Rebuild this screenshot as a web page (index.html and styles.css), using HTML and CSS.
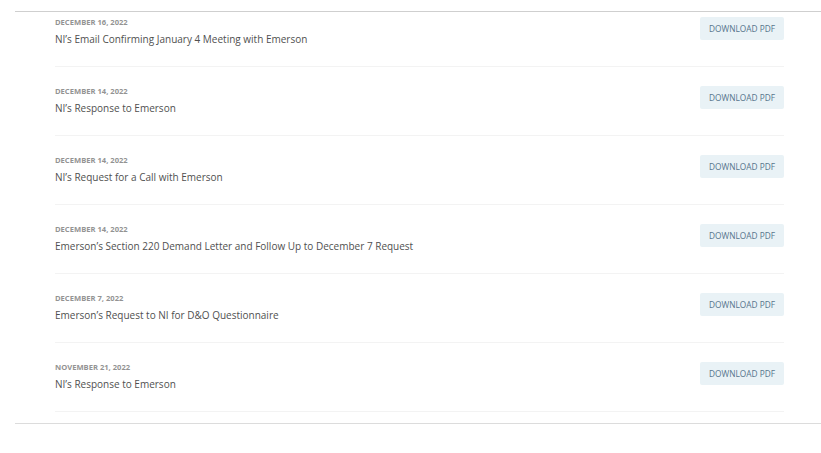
FILE: index.html
```html
<!DOCTYPE html>
<html lang="en">
<head>
  <meta charset="UTF-8" />
  <meta name="viewport" content="width=device-width, initial-scale=1.0"/>
  <title>Documents</title>
  <link rel="stylesheet" href="styles.css">
</head>
<body>
  <div class="docs">
    <div class="doc-row first">
      <div class="doc-info">
        <div class="doc-date">December 16, 2022</div>
        <div class="doc-title">NI’s Email Confirming January 4 Meeting with Emerson</div>
      </div>
      <a class="doc-btn" href="#">Download PDF</a>
    </div>
    <div class="doc-row">
      <div class="doc-info">
        <div class="doc-date">December 14, 2022</div>
        <div class="doc-title">NI’s Response to Emerson</div>
      </div>
      <a class="doc-btn" href="#">Download PDF</a>
    </div>
    <div class="doc-row">
      <div class="doc-info">
        <div class="doc-date">December 14, 2022</div>
        <div class="doc-title">NI’s Request for a Call with Emerson</div>
      </div>
      <a class="doc-btn" href="#">Download PDF</a>
    </div>
    <div class="doc-row">
      <div class="doc-info">
        <div class="doc-date">December 14, 2022</div>
        <div class="doc-title">Emerson’s Section 220 Demand Letter and Follow Up to December 7 Request</div>
      </div>
      <a class="doc-btn" href="#">Download PDF</a>
    </div>
    <div class="doc-row">
      <div class="doc-info">
        <div class="doc-date">December 7, 2022</div>
        <div class="doc-title">Emerson’s Request to NI for D&amp;O Questionnaire</div>
      </div>
      <a class="doc-btn" href="#">Download PDF</a>
    </div>
    <div class="doc-row">
      <div class="doc-info">
        <div class="doc-date">November 21, 2022</div>
        <div class="doc-title">NI’s Response to Emerson</div>
      </div>
      <a class="doc-btn" href="#">Download PDF</a>
    </div>
  </div>
</body>
</html>
```

FILE: styles.css
```css
body {
  font-family: 'Open Sans', sans-serif;
  background: #fff;
  margin: 0;
  padding: 0;
}

.docs {
  margin: 11px 0 0 15px;
  padding: 0 37px 11px 40px;
  border-top: 1px solid #cfcfcf;
  border-bottom: 1px solid #dcdcdc;
}

.doc-row {
  display: flex;
  justify-content: space-between;
  align-items: flex-start;
  padding: 19px 0 19px;
  border-bottom: 1px solid #f3f3f3;
}

.doc-row.first {
  padding-top: 5px;
}

.doc-date {
  font-size: 7.6px;
  line-height: 10px;
  font-weight: 700;
  text-transform: uppercase;
  color: #939393;
}

.doc-title {
  margin-top: 4px;
  font-size: 10px;
  line-height: 16px;
  color: #505050;
}

.doc-btn {
  display: block;
  width: 84px;
  height: 23px;
  line-height: 23px;
  text-align: center;
  background: #e9f2f6;
  color: #56758c;
  font-size: 8.3px;
  text-transform: uppercase;
  text-decoration: none;
  border-radius: 2px;
}
```
